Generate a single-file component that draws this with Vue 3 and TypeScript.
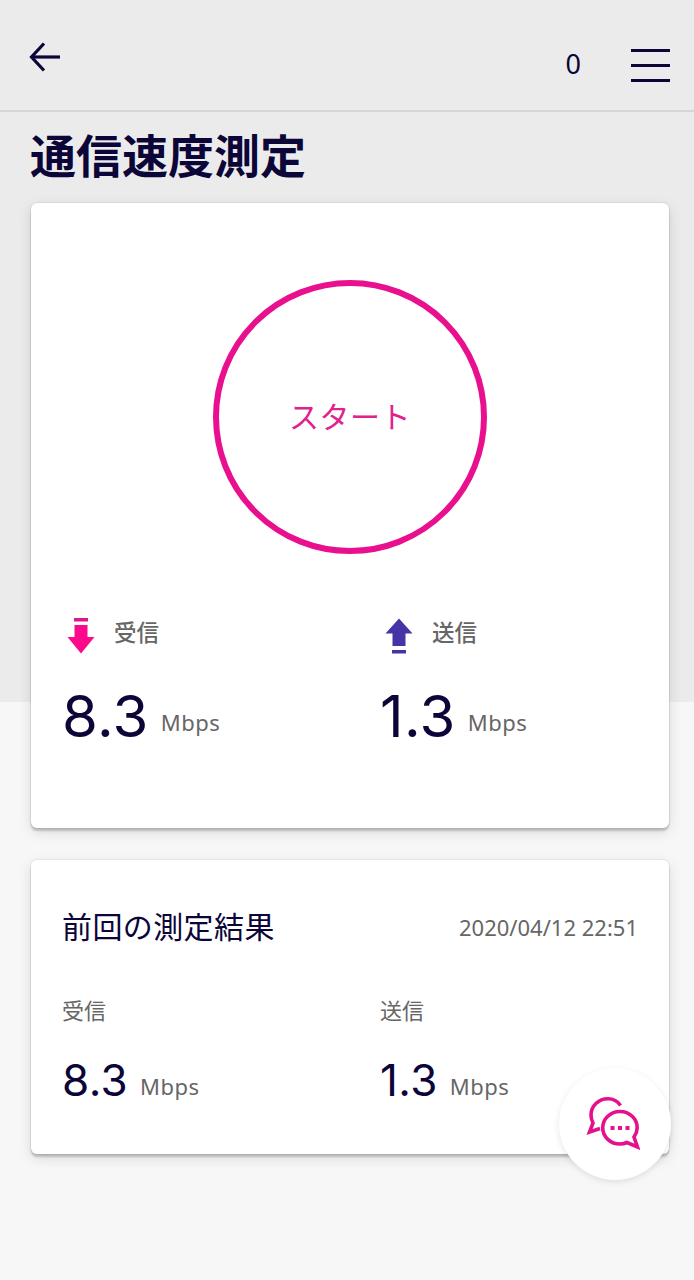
<script setup lang="ts">
interface Speed {
  label: string
  value: string
}

const current: Speed[] = [
  { label: '受信', value: '8.3' },
  { label: '送信', value: '1.3' },
]
const previous: Speed[] = [
  { label: '受信', value: '8.3' },
  { label: '送信', value: '1.3' },
]
</script>

<template>
  <div class="page">
    <header class="topbar">
      <button class="back" aria-label="戻る">
        <svg width="32" height="30" viewBox="0 0 32 30" fill="none" stroke="#0b0538" stroke-width="3.2">
          <path d="M31 15H3" />
          <path d="M15 1.5 2.5 15 15 28.5" />
        </svg>
      </button>
      <span class="count">0</span>
      <button class="menu" aria-label="メニュー">
        <span></span><span></span><span></span>
      </button>
    </header>

    <h1 class="title">通信速度測定</h1>

    <section class="card main-card">
      <button class="start">スタート</button>
      <div class="speeds">
        <div v-for="(s, i) in current" :key="s.label" class="speed" :class="{ up: i === 1 }">
          <div class="speed-head">
            <svg v-if="i === 0" width="28" height="36" viewBox="0 0 28 36">
              <rect x="7" y="0" width="14" height="3.5" fill="#e0168c" />
              <path d="M7.5 7H20.5V19H27.5L14 35.5.5 19H7.5Z" fill="#fc0a8c" />
            </svg>
            <svg v-else width="28" height="36" viewBox="0 0 28 36">
              <path d="M14 .5 27.5 15.5H20.5V28H7.5V15.5H.5Z" fill="#4534a8" />
              <rect x="7" y="32" width="14" height="3.5" fill="#4534a8" />
            </svg>
            <span class="speed-label">{{ s.label }}</span>
          </div>
          <div class="reading">
            <span class="value">{{ s.value }}</span>
            <span class="unit">Mbps</span>
          </div>
        </div>
      </div>
    </section>

    <section class="card last-card">
      <div class="last-head">
        <h2>前回の測定結果</h2>
        <time>2020/04/12 22:51</time>
      </div>
      <div class="last-grid">
        <div v-for="s in previous" :key="s.label">
          <div class="last-label">{{ s.label }}</div>
          <div class="reading small">
            <span class="value">{{ s.value }}</span>
            <span class="unit">Mbps</span>
          </div>
        </div>
      </div>
    </section>

    <button class="chat" aria-label="チャット">
      <svg width="54" height="54" viewBox="0 0 54 54" fill="none" stroke="#e5108c" stroke-width="3.6" stroke-linejoin="miter">
        <path d="M34.5 8.5C31.5 4 27 1.8 22 1.8 12.5 1.8 5 9 5 18c0 3 .8 5.6 2 8L3.5 35l10.5-3.5" />
        <path d="M34 14.5c-9.5 0-17.3 7.2-17.3 16.3S24.5 47 34 47c2.6 0 4.8-.5 7-1.5L51.5 50 48 40c1.8-2.6 3.2-5.8 3.2-9.2C51.2 21.7 43.5 14.5 34 14.5Z" />
        <g fill="#e5108c" stroke="none">
          <rect x="24.5" y="29" width="4" height="4" />
          <rect x="32" y="29" width="4" height="4" />
          <rect x="39.5" y="29" width="4" height="4" />
        </g>
      </svg>
    </button>
  </div>
</template>

<style>
body {
  margin: 0;
}
</style>

<style scoped>
.page {
  position: relative;
  width: 694px;
  height: 1280px;
  overflow: hidden;
  box-sizing: border-box;
  background: linear-gradient(#ebebec 702px, #f7f7f7 702px);
  font-family: "Noto Sans", "Noto Sans CJK JP", sans-serif;
  color: #0b0538;
}
button {
  background: none;
  border: 0;
  padding: 0;
  font-family: inherit;
}
.topbar {
  height: 110px;
  border-bottom: 2px solid #d6d6d6;
  display: flex;
  align-items: flex-start;
  padding: 0 24px 0 29px;
}
.back {
  height: 30px;
  margin-top: 42px;
  display: flex;
}
.count {
  margin-left: auto;
  margin-top: 46px;
  font-size: 27px;
  line-height: 36px;
}
.menu {
  margin-left: 50px;
  margin-top: 49px;
  width: 39px;
  display: flex;
  flex-direction: column;
  gap: 12px;
}
.menu span {
  height: 3px;
  background: #0b0538;
}
.title {
  margin: 13px 0 0 30px;
  font-size: 46px;
  line-height: 60px;
  font-weight: 700;
}
.card {
  margin: 0 25px 0 31px;
  background: #fff;
  border-radius: 6px;
  box-shadow: 0 0 0 1px rgba(0, 0, 0, 0.05), 0 3px 2px rgba(0, 0, 0, 0.18), 0 4px 14px rgba(0, 0, 0, 0.12);
}
.main-card {
  margin-top: 18px;
  height: 625px;
  padding-top: 77px;
  box-sizing: border-box;
  display: flex;
  flex-direction: column;
}
.start {
  align-self: center;
  width: 274px;
  height: 274px;
  box-sizing: border-box;
  border: 6px solid #e9108e;
  border-radius: 50%;
  color: #e0218e;
  font-size: 30px;
  font-weight: 400;
  letter-spacing: 0.5px;
  padding-bottom: 4px;
}
.speeds {
  display: grid;
  grid-template-columns: 318px 1fr;
  padding-left: 31px;
  margin-top: 63px;
}
.speed-head {
  display: flex;
  align-items: center;
  gap: 19px;
  padding-left: 5px;
  height: 38px;
}
.up .speed-head {
  padding-left: 5px;
}
.speed-label {
  font-size: 22.5px;
  font-weight: 500;
  color: #666;
  margin-top: -10px;
}
.reading {
  display: flex;
  align-items: baseline;
  gap: 12px;
  margin-top: 26px;
}
.value {
  font-family: Inter, "Noto Sans", sans-serif;
  font-size: 58px;
  line-height: 70px;
  font-weight: 400;
  letter-spacing: 0.4px;
}
.unit {
  font-size: 22px;
  color: #666;
  letter-spacing: 0.5px;
  transform: translateY(-6px);
}
.last-card {
  margin-top: 32px;
  height: 294px;
  padding: 44px 31px 0;
  box-sizing: border-box;
}
.last-head {
  display: flex;
  justify-content: space-between;
  align-items: center;
}
.last-head h2 {
  margin: 0;
  font-size: 30px;
  line-height: 46px;
  font-weight: 400;
  letter-spacing: 0.4px;
}
.last-head time {
  font-size: 22px;
  color: #666;
}
.last-grid {
  display: grid;
  grid-template-columns: 318px 1fr;
  margin-top: 44px;
}
.last-label {
  font-size: 22px;
  line-height: 32px;
  color: #666;
}
.reading.small {
  margin-top: 26px;
}
.small .value {
  font-size: 44px;
  line-height: 56px;
}
.small .unit {
  transform: translateY(-1px);
}
.chat {
  position: absolute;
  left: 559px;
  top: 1068px;
  width: 112px;
  height: 112px;
  padding-right: 4px;
  border-radius: 50%;
  background: #fff;
  box-shadow: 0 2px 6px rgba(0, 0, 0, 0.1);
  display: flex;
  align-items: center;
  justify-content: center;
}
</style>
